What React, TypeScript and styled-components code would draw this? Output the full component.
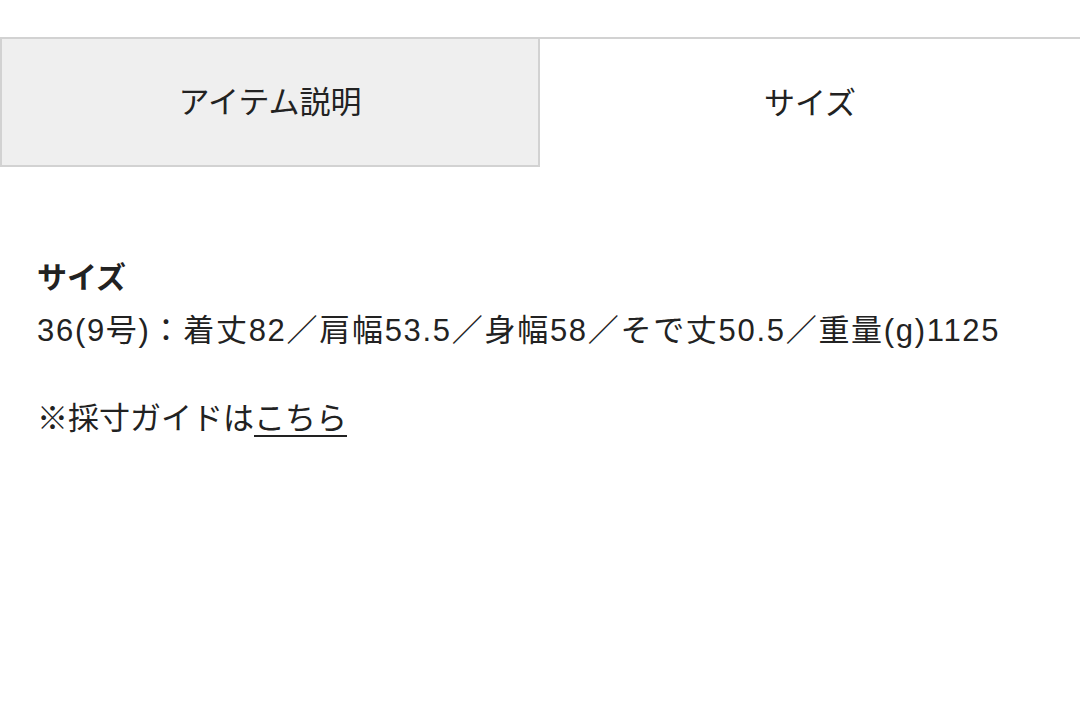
import styled, { createGlobalStyle } from "styled-components";

const GlobalStyle = createGlobalStyle`
  html, body {
    margin: 0;
    padding: 0;
    background: #fff;
  }
  body {
    font-family: "Liberation Sans", "Noto Sans CJK JP", sans-serif;
    color: #222;
  }
`;

const Page = styled.div`
  width: 1080px;
  height: 714px;
  padding-top: 37px;
  box-sizing: border-box;
  overflow: hidden;
`;

const TabBar = styled.div`
  display: flex;
  border-top: 2px solid #d2d2d2;
`;

const Tab = styled.div<{ $active?: boolean }>`
  flex: 0 0 540px;
  height: 128px;
  box-sizing: border-box;
  padding-bottom: 6px;
  display: flex;
  align-items: center;
  justify-content: center;
  font-size: 31px;
  color: #222;
  background: ${(p) => (p.$active ? "#fff" : "#efefef")};
  border: ${(p) => (p.$active ? "none" : "2px solid #d2d2d2")};
  border-top: none;
`;

const Content = styled.div`
  padding: 84px 37px 0;
  font-size: 31px;
  line-height: 53px;
`;

const Heading = styled.div`
  font-weight: bold;
  font-size: 30px;
`;

const Spec = styled.div`
  letter-spacing: 1.7px;
  white-space: nowrap;
`;

const Guide = styled.div`
  margin-top: 35px;
  a {
    color: #222;
    text-decoration: underline;
    text-underline-offset: 6px;
    text-decoration-thickness: 2px;
  }
`;

export default function App() {
  return (
    <Page>
      <GlobalStyle />
      <TabBar>
        <Tab>アイテム説明</Tab>
        <Tab $active>サイズ</Tab>
      </TabBar>
      <Content>
        <Heading>サイズ</Heading>
        <Spec>36(9号)：着丈82／肩幅53.5／身幅58／そで丈50.5／重量(g)1125</Spec>
        <Guide>
          ※採寸ガイドは<a href="#">こちら</a>
        </Guide>
      </Content>
    </Page>
  );
}
